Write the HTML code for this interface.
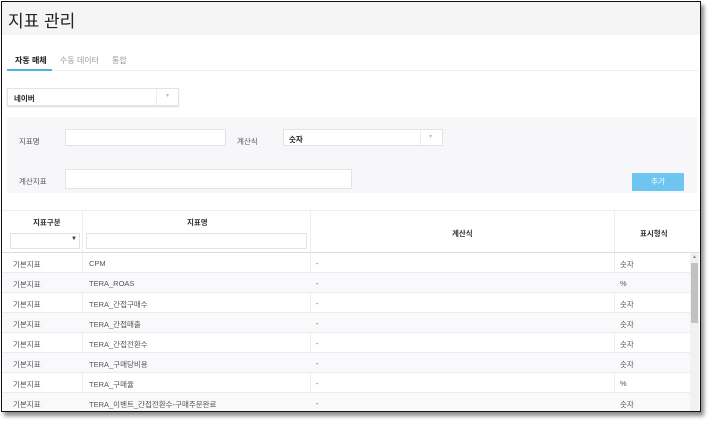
<!DOCTYPE html>
<html><head><meta charset="utf-8"><style>
*{box-sizing:border-box;margin:0;padding:0}
body{width:714px;height:424px;background:#fff;font-family:"Liberation Sans","Noto Sans CJK KR",sans-serif;position:relative;overflow:hidden;color:#333}
.frame{position:absolute;left:1px;top:1px;width:700px;height:411px;border:1px solid #111;box-shadow:3px 4px 4px rgba(0,0,0,.45);overflow:hidden;background:#fff}
.w{position:absolute;left:-2px;top:-2px;width:702px;height:413px}
.a{position:absolute}
.hdr{left:0;top:0;width:702px;height:35px;background:#f5f5f5}
.title{left:8px;top:7px;font-size:17px;color:#222}
.tab{top:55px;font-size:8px;color:#999}
.inp{background:#fff;border:1px solid #e3e3e6}
.lbl{font-size:7.5px;color:#555}
.t{font-size:7.5px;color:#555}
.row{position:absolute;left:2px;width:688px;height:20px;border-bottom:1px solid #ececee}
.row span{position:absolute;top:6px;font-size:7.5px;color:#555}
</style></head><body>
<div class="frame"><div class="w">
<div class="a hdr"></div>
<div class="a title">지표 관리</div>
<div class="a tab" style="left:15px;color:#222;font-weight:bold">자동 매체</div>
<div class="a tab" style="left:60px">수동 데이터</div>
<div class="a tab" style="left:112px">통합</div>
<div class="a" style="left:7px;top:70px;width:692px;height:1px;background:#eee"></div>
<div class="a" style="left:7px;top:69px;width:45px;height:2px;background:#4ab3e6"></div>
<div class="a inp" style="left:7px;top:88px;width:172px;height:18px;box-shadow:0 1px 1px #ddd"></div>
<div class="a" style="left:156px;top:89px;width:1px;height:16px;background:#eee"></div>
<div class="a t" style="left:14px;top:93px;color:#222;font-weight:bold">네이버</div>
<div class="a" style="left:166px;top:92px;font-size:6px;color:#bbb">▾</div>
<div class="a" style="left:7px;top:117px;width:690px;height:76px;background:#f7f7f9"></div>
<div class="a lbl" style="left:19px;top:136px">지표명</div>
<div class="a inp" style="left:65px;top:129px;width:161px;height:17px"></div>
<div class="a lbl" style="left:237px;top:136px">계산식</div>
<div class="a inp" style="left:283px;top:129px;width:160px;height:17px"></div>
<div class="a" style="left:420px;top:130px;width:1px;height:15px;background:#eee"></div>
<div class="a t" style="left:289px;top:134px;color:#222;font-weight:bold">숫자</div>
<div class="a" style="left:429px;top:133px;font-size:6px;color:#bbb">▾</div>
<div class="a lbl" style="left:19px;top:176px">계산지표</div>
<div class="a inp" style="left:65px;top:169px;width:287px;height:20px"></div>
<div class="a" style="left:632px;top:173px;width:52px;height:18px;background:#6ec6f0;border-radius:1px;color:#fff;font-size:7.5px;text-align:center;line-height:18px">추가</div>
<div class="a" style="left:2px;top:210px;width:698px;height:1px;background:#eee"></div>
<div class="a" style="left:82px;top:210px;width:1px;height:203px;background:#eee"></div>
<div class="a" style="left:310px;top:210px;width:1px;height:203px;background:#eee"></div>
<div class="a" style="left:614px;top:210px;width:1px;height:203px;background:#eee"></div>
<div class="a t" style="left:33px;top:217px;color:#333;font-weight:bold">지표구분</div>
<div class="a t" style="left:187px;top:217px;color:#333;font-weight:bold">지표명</div>
<div class="a t" style="left:452px;top:228px;color:#333;font-weight:bold">계산식</div>
<div class="a t" style="left:640px;top:228px;color:#333;font-weight:bold">표시형식</div>
<div class="a inp" style="left:10px;top:233px;width:70px;height:16px"></div>
<div class="a" style="left:71px;top:236px;font-size:6px;color:#333">▼</div>
<div class="a inp" style="left:86px;top:233px;width:221px;height:16px"></div>
<div class="a" style="left:2px;top:252px;width:698px;height:1px;background:#d5dde5"></div>
<div class="row" style="top:253px"><span style="left:11px">기본지표</span><span style="left:87px">CPM</span><span style="left:314px">-</span><span style="left:618px">숫자</span></div>
<div class="row" style="top:273px;background:#f9f9fb"><span style="left:11px">기본지표</span><span style="left:87px">TERA_ROAS</span><span style="left:314px">-</span><span style="left:618px">%</span></div>
<div class="row" style="top:293px"><span style="left:11px">기본지표</span><span style="left:87px">TERA_간접구매수</span><span style="left:314px">-</span><span style="left:618px">숫자</span></div>
<div class="row" style="top:313px;background:#f9f9fb"><span style="left:11px">기본지표</span><span style="left:87px">TERA_간접매출</span><span style="left:314px">-</span><span style="left:618px">숫자</span></div>
<div class="row" style="top:333px"><span style="left:11px">기본지표</span><span style="left:87px">TERA_간접전환수</span><span style="left:314px">-</span><span style="left:618px">숫자</span></div>
<div class="row" style="top:353px;background:#f9f9fb"><span style="left:11px">기본지표</span><span style="left:87px">TERA_구매당비용</span><span style="left:314px">-</span><span style="left:618px">숫자</span></div>
<div class="row" style="top:373px"><span style="left:11px">기본지표</span><span style="left:87px">TERA_구매율</span><span style="left:314px">-</span><span style="left:618px">%</span></div>
<div class="row" style="top:393px;background:#f9f9fb"><span style="left:11px">기본지표</span><span style="left:87px">TERA_이벤트_간접전환수-구매주문완료</span><span style="left:314px">-</span><span style="left:618px">숫자</span></div>
<div class="a" style="left:690px;top:253px;width:9px;height:160px;background:#f1f1f1"></div>
<div class="a" style="left:691px;top:263px;width:7px;height:60px;background:#c1c1c1"></div>
<div class="a" style="left:692px;top:254px;font-size:5px;color:#888">▲</div>
</div></div>
</body></html>
